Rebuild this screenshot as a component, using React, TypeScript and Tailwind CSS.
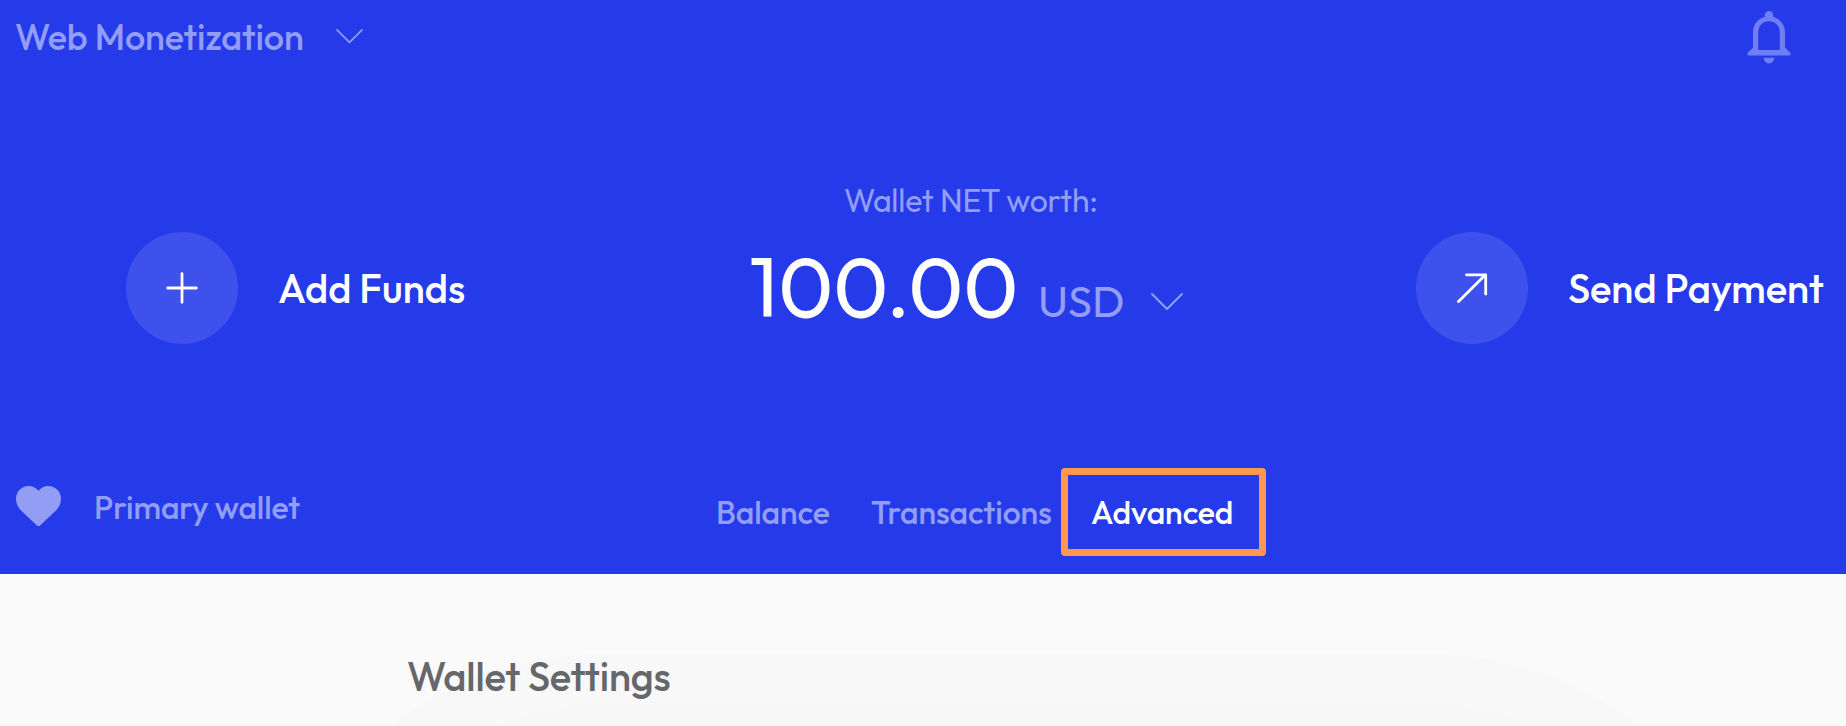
import type { ReactNode } from 'react';

function Chevron({ className }: { className: string }) {
  return (
    <svg viewBox="0 0 32 18" fill="none" stroke="currentColor" strokeWidth="2" strokeLinecap="round" strokeLinejoin="round" className={className}>
      <path d="M1 1 L16 16 L31 1" />
    </svg>
  );
}

function BellIcon() {
  return (
    <svg viewBox="0 0 44 53" fill="currentColor" className="h-[53px] w-[44px] shrink-0 text-[#707df3]">
      <path
        fillRule="evenodd"
        d="M22 0a4.200 4.200 0 0 1 4.200 4.200v1.900C33.200 7.900 38 13.800 38 21v15.500l5.500 5.500v2.500H.5V42L6 36.500V21C6 13.800 10.800 7.900 17.800 6.100V4.200A4.200 4.200 0 0 1 22 0ZM11.200 39h21.600V21.500C32.800 15 28.400 10.300 22 10.300S11.200 15 11.200 21.500Z"
      />
      <path d="M16.700 46.800h10.600a5.300 5.600 0 0 1-10.600 0Z" />
    </svg>
  );
}

function HeartIcon() {
  return (
    <svg viewBox="0 0 45 40" fill="currentColor" className="h-[40px] w-[45px] shrink-0">
      <path d="M22.500 4.700C25 1.700 28.500 0 32.400 0 39.500 0 45 5.500 45 12.800c0 4.600-1.800 8.400-5 11.700L24.300 39.300a2.600 2.600 0 0 1-3.600 0L5 24.500C1.800 21.200 0 17.400 0 12.800 0 5.500 5.500 0 12.600 0c3.900 0 7.400 1.700 9.900 4.700Z" />
    </svg>
  );
}

function RoundAction({ icon, children }: { icon: ReactNode; children: ReactNode }) {
  return (
    <button className="flex items-center gap-10 whitespace-nowrap text-[40px] leading-[48px] font-medium text-white">
      <span className="flex size-28 shrink-0 items-center justify-center rounded-full bg-[#3e51ed]">{icon}</span>
      <span>{children}</span>
    </button>
  );
}

export default function App() {
  return (
    <div className="flex h-[726px] w-full flex-col overflow-hidden bg-[#fafafa] font-['Outfit','Lato',sans-serif]">
      <header className="h-[574px] shrink-0 bg-[#253bea] text-[#929df5]">
        <div className="flex h-[74px] items-center justify-between pr-[55px] pl-[15px]">
          <button className="flex items-center text-left text-[36px] leading-[44px] font-medium">
            <span className="w-[321px] tracking-[-0.1px] whitespace-nowrap">Web Monetization</span>
            <Chevron className="h-[15px] w-[27px] -translate-y-px" />
          </button>
          <BellIcon />
        </div>

        <div className="mt-[106px] flex h-[216px] items-center pl-[126px]">
          <div className="w-[622px] shrink-0">
            <RoundAction
              icon={
                <svg viewBox="0 0 32 32" stroke="white" strokeWidth="2.800" strokeLinecap="round" className="size-8">
                  <path d="M16 1.700V30.300M1.700 16H30.300" />
                </svg>
              }
            >
              Add Funds
            </RoundAction>
          </div>

          <div className="h-full w-[668px] shrink-0">
            <p className="pl-24 text-[32px] leading-10 tracking-[-0.15px]">Wallet NET worth:</p>
            <div className="mt-6 flex items-baseline leading-[84px]">
              <span className="w-[290px] pl-px text-[84px] text-white">100.00</span>
              <span className="w-[113px] text-[44px]">USD</span>
              <Chevron className="h-[18px] w-[32px] -translate-y-[6px]" />
            </div>
          </div>

          <RoundAction
            icon={
              <svg viewBox="0 0 32 32" fill="none" stroke="white" strokeWidth="2.800" strokeLinecap="round" strokeLinejoin="round" className="size-8">
                <path d="M2.500 29.500 L29.500 2.800M10.500 2.800H29.700V22" />
              </svg>
            }
          >
            Send Payment
          </RoundAction>
        </div>

        <div className="mt-[72px] flex h-[88px] items-center text-[32px] leading-10 font-medium">
          <div className="flex w-[716px] shrink-0 items-center gap-[33px] pb-3 pl-4">
            <HeartIcon />
            <span className="pt-px tracking-[-0.12px]">Primary wallet</span>
          </div>
          <nav className="flex items-center tracking-[-0.1px]">
            <a className="w-[155px]">Balance</a>
            <a className="w-[190px]">Transactions</a>
            <a className="flex h-[88px] w-[205px] items-center rounded-[4px] border-[7px] border-[#ff984f] pl-[23px] text-white">
              Advanced
            </a>
          </nav>
        </div>
      </header>

      <main className="relative grow overflow-hidden">
        <div className="absolute top-20 left-[260px] h-[900px] w-[1510px] rounded-[340px] bg-[#f8f8f8]" />
        <div className="absolute top-[132px] left-[272px] h-[900px] w-[1491px] rounded-[340px] bg-[#f7f7f7]" />
        <h1 className="relative pt-[78px] pl-[407px] text-[40px] leading-[48px] font-medium tracking-[-0.18px] text-[#66676a]">
          Wallet Settings
        </h1>
      </main>
    </div>
  );
}
